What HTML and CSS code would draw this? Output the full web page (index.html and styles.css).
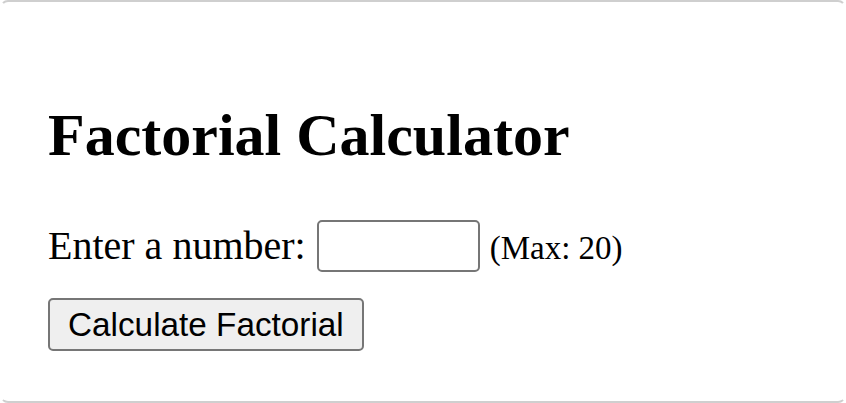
FILE: index.html
```html
<!DOCTYPE html>
<html>
<head>
<meta charset="utf-8">
<link rel="stylesheet" href="styles.css">
<title>Factorial Calculator</title>
</head>
<body>
<div class="card">
  <h1 class="title">Factorial Calculator</h1>
  <div class="row">
    <label class="label" for="num">Enter a number:</label>
    <input class="num-input" id="num" type="number">
    <small class="hint">(Max: 20)</small>
  </div>
  <button class="calc-btn" type="button">Calculate Factorial</button>
</div>
</body>
</html>
```
FILE: styles.css
```css
html, body {
  margin: 0;
  padding: 0;
  background: #fff;
}
body {
  font-family: "Liberation Serif", "Times New Roman", serif;
  color: #000;
  overflow: hidden;
}
.card {
  box-sizing: border-box;
  height: 403px;
  border: 2px solid #cfcfcf;
  border-left-color: transparent;
  border-right-color: transparent;
  border-radius: 8px;
  padding: 99px 46px 0 46px;
}
.title {
  font-size: 60px;
  font-weight: bold;
  line-height: 69px;
  margin: 0 0 50px 0;
}
.row {
  display: flex;
  align-items: center;
  height: 52px;
}
.label {
  font-size: 40px;
  line-height: 46px;
  margin-right: 11px;
}
.num-input {
  box-sizing: border-box;
  width: 163px;
  height: 52px;
  border: 2px solid #767676;
  border-radius: 5px;
  padding: 0 5px;
  margin: 0 10px 0 0;
  font-family: "Liberation Sans", Arial, sans-serif;
  font-size: 33px;
  background: #fff;
}
.hint {
  font-size: 33px;
  line-height: 38px;
  margin-top: 3px;
}
.calc-btn {
  display: block;
  box-sizing: border-box;
  margin-top: 26px;
  height: 53px;
  padding: 0 18px;
  border: 2px solid #767676;
  border-radius: 5px;
  background: #efefef;
  color: #000;
  font-family: "Liberation Sans", Arial, sans-serif;
  font-size: 33.3px;
}
```
